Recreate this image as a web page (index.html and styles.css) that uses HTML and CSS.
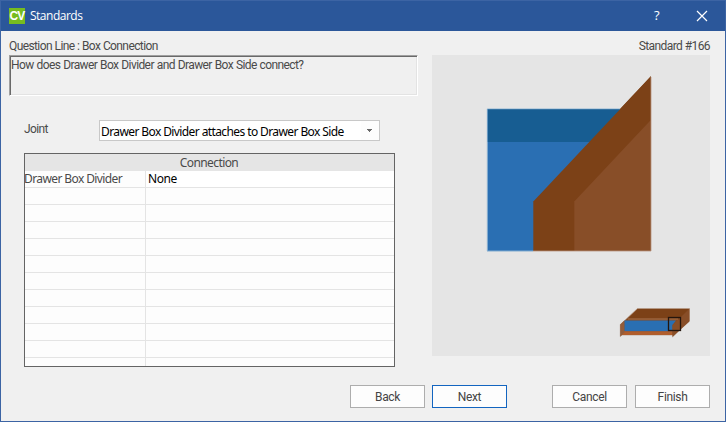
FILE: index.html
```html
<!DOCTYPE html>
<html lang="en">
<head>
<meta charset="utf-8">
<title>Standards</title>
<link rel="stylesheet" href="styles.css">
</head>
<body>
<div class="window">
  <header class="titlebar">
    <span class="logo">CV</span>
    <h1 class="title">Standards</h1>
    <span class="help">?</span>
    <svg class="close" width="12" height="12" viewBox="0 0 12 12"><path d="M1 1 11 11M11 1 1 11" stroke="#fff" stroke-width="1.2" fill="none"/></svg>
  </header>
  <main class="content">
    <section class="form">
      <div class="caption"><span>Question Line : Box Connection</span></div>
      <div class="question">How does Drawer Box Divider and Drawer Box Side connect?</div>
      <div class="field">
        <label class="field-label">Joint</label>
        <div class="select">
          <span class="select-value">Drawer Box Divider attaches to Drawer Box Side</span>
          <span class="select-button"><svg width="5" height="3" viewBox="0 0 5 3" shape-rendering="crispEdges"><path d="M0 0h5v1H4v1H3v1H2V2H1V1H0z" fill="#6a6a6a"/></svg></span>
        </div>
      </div>
      <div class="table">
        <div class="table-head">Connection</div>
        <div class="row first"><span class="name">Drawer Box Divider</span><span class="value">None</span></div>
        <div class="row"><span class="name"></span><span class="value"></span></div>
        <div class="row"><span class="name"></span><span class="value"></span></div>
        <div class="row"><span class="name"></span><span class="value"></span></div>
        <div class="row"><span class="name"></span><span class="value"></span></div>
        <div class="row"><span class="name"></span><span class="value"></span></div>
        <div class="row"><span class="name"></span><span class="value"></span></div>
        <div class="row"><span class="name"></span><span class="value"></span></div>
        <div class="row"><span class="name"></span><span class="value"></span></div>
        <div class="row"><span class="name"></span><span class="value"></span></div>
        <div class="row"><span class="name"></span><span class="value"></span></div>
        <div class="row"><span class="name"></span><span class="value"></span></div>
      </div>
    </section>
    <section class="preview">
      <div class="caption standard"><span>Standard #166</span></div>
      <svg class="picture" width="278" height="301" viewBox="432 55 278 301">
        <path d="M487.5 109H633V251H487.5z" fill="#2a6fb3"/>
        <path d="M487.5 109H633V142H487.5z" fill="#175d92"/>
        <path d="M620 109 651 76V251H620z" fill="#7c4117"/>
        <path d="M622 108.700 651 77.500V109z" fill="#7c4117"/>
        <path d="M533.300 201.500 650.800 76.500V251H533.300z" fill="#7c4117"/>
        <path d="M574.300 201.500 650.800 120V251H574.300z" fill="#884e28"/>
        <path d="M487.300 251V108.900H620" fill="none" stroke="#80acd0" stroke-width=".7"/>
        <path d="M487 251H533" fill="none" stroke="#80acd0" stroke-width="1"/>
        <path d="M533 251H651V77" fill="none" stroke="#b99680" stroke-width=".8"/>
        <path d="M637.500 308.500H689.500V321L672.500 337V335H622L620.300 336.500V324.500z" fill="#864b23" stroke="#b49a86" stroke-width=".7"/>
        <path d="M638 309H689L680 318.500H628z" fill="#7c4117"/>
        <path d="M628 319H678" stroke="#a4704a" stroke-width="1.200"/>
        <path d="M624.300 320.500H676L672.500 325V331.500H624.300z" fill="#2a6fb3"/>
        <path d="M622 331.300H672.500V335H622z" fill="#b05e2d"/>
        <path d="M620.300 324.500 624.300 320.500V332.500L620.300 336.500z" fill="#935c3a"/>
        <path d="M672.500 325 689.300 309V321.500L672.500 336.500z" fill="#884e28"/>
        <rect x="668.500" y="317.500" width="12" height="13" fill="none" stroke="#24150d" stroke-width="1.300"/>
      </svg>
    </section>
  </main>
  <footer class="actions">
    <div class="group">
      <button class="btn">Back</button>
      <button class="btn primary">Next</button>
    </div>
    <button class="btn">Cancel</button>
    <button class="btn finish">Finish</button>
  </footer>
</div>
</body>
</html>
```
FILE: styles.css
```css
* { box-sizing: border-box; }
body { margin: 0; }
.window {
  width: 726px;
  height: 422px;
  display: flex;
  flex-direction: column;
  background: #f0f0f0;
  border: 1px solid #3c64a4;
  color: #4a4a4a;
  font: 12px/16px Roboto, sans-serif;
  letter-spacing: -0.6px;
  white-space: nowrap;
  overflow: hidden;
}
.titlebar {
  height: 30px;
  flex: none;
  display: flex;
  align-items: center;
  padding: 0 17px 0 8px;
  background: #2b579a;
  color: #fff;
}
.logo {
  width: 16px;
  height: 16px;
  margin-top: -1px;
  background: #77bc1f;
  font: bold 12px/16px "Liberation Sans", sans-serif;
  letter-spacing: -0.8px;
  text-align: center;
}
.title {
  margin: 0 auto 0 5px;
  font: 12px/16px "Open Sans", sans-serif;
  letter-spacing: -0.5px;
}
.help { margin: -2px 37px 0 0; font: 13px/16px "Open Sans", sans-serif; }
.content { display: flex; justify-content: space-between; padding: 7px 15px 0 8px; }
.form { width: 409px; }
.caption { height: 17px; word-spacing: 0.2px; }
.question {
  width: 409px;
  height: 41px;
  padding: 1px 0 0 1px;
  border-style: solid;
  border-width: 1px;
  border-color: #a0a0a0 #fff #fff #a0a0a0;
  box-shadow: inset 1px 1px #696969, inset -1px -1px #e3e3e3;
  word-spacing: 0.5px;
}
.standard { text-align: right; }
.field { display: flex; height: 21px; margin: 24px 0 0 15px; }
.field-label { width: 75px; padding-top: 1px; }
.select {
  width: 281px;
  height: 21px;
  display: flex;
  justify-content: space-between;
  background: #fff;
  border: 1px solid #c8c8c8;
  color: #000;
  font: 12px/19px "Noto Sans", sans-serif;
}
.select-value { padding: 1px 0 0 1px; }
.select-button { width: 18px; display: flex; align-items: center; padding: 0 0 0 6px; background: #fdfdfd; }
.table {
  width: 371px;
  height: 214px;
  margin: 12px 0 0 15px;
  border: 1px solid #646464;
  background: #fdfdfd;
  overflow: hidden;
  font: 12px/16px "Noto Sans", sans-serif;
}
.table-head { height: 17px; padding-right: 1px; background: #e5e5e5; text-align: center; line-height: 18px; }
.row { display: flex; height: 17px; border-bottom: 1px solid #e4e4e4; }
.name { width: 121px; border-right: 1px solid #e4e4e4; text-indent: -1px; }
.value { flex: 1; padding-left: 2px; color: #000; letter-spacing: -0.4px; }
.first .value { background: #fff; }
.preview { width: 278px; }
.picture { display: block; background: #e5e5e5; }
.actions { display: flex; justify-content: flex-end; gap: 8px; padding: 18px 15px 0 0; }
.group { display: flex; gap: 7px; margin-right: 37px; }
.btn {
  width: 75px;
  height: 23px;
  padding: 0;
  border: 1px solid #adadad;
  background: #fdfdfd;
  color: #444;
  font: 12px/16px Roboto, sans-serif;
  letter-spacing: -0.35px;
}
.primary { border-color: #1365c0; }
```
